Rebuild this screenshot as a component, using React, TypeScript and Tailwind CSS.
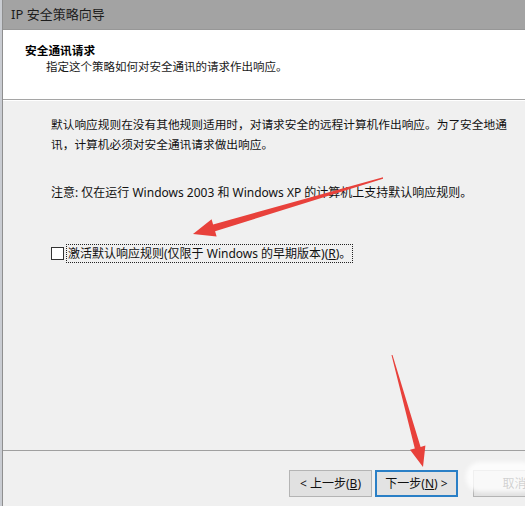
const font = {
  fontFamily: '"Noto Sans", "Noto Sans CJK SC", sans-serif',
};

const Arrows = () => (
  <svg
    className="pointer-events-none absolute left-0 top-0"
    width={525}
    height={506}
    viewBox="0 0 525 506"
  >
    {/* arrow pointing at the checkbox */}
    <polygon
      fill="#e8413b"
      points="383,177.3 213.1,224.4 211.6,219.2 193,234 216.6,236.4 215.1,231.2 383,178.7"
    />
    {/* arrow pointing at the next button */}
    <polygon
      fill="#e8413b"
      points="392.5,354.9 420.6,446.9 425.4,445.6 423,467 410,449.8 414.8,448.5 391.5,355.1"
    />
  </svg>
);

const WizardButton = ({
  children,
  primary = false,
}: {
  children: React.ReactNode;
  primary?: boolean;
}) => (
  <button
    className={
      primary
        ? "flex h-[27px] w-[83px] shrink-0 items-center justify-center border-2 border-[#2a7fc6] bg-[#e3e3e3] text-[12px] text-[#111]"
        : "flex h-[27px] w-[83px] shrink-0 items-center justify-center border border-[#b4b4b4] bg-[#e1e1e1] text-[12px] text-[#111]"
    }
  >
    {children}
  </button>
);

export default function App() {
  return (
    <div
      className="relative flex h-[506px] w-[525px] overflow-hidden bg-[#f0f0f0] text-[#111]"
      style={font}
    >
      {/* desktop edge behind the window */}
      <div className="w-[2px] shrink-0 bg-[#c9ccd2]" />

      <div className="flex min-w-0 flex-1 flex-col border-l border-[#8f8f8f]">
        {/* Title bar */}
        <div className="flex h-[30px] shrink-0 items-center border-b border-[#979797] bg-[#a3a3a3] pl-[8px] text-[13px] text-[#1c1c1c]">
          IP 安全策略向导
        </div>

        {/* Header */}
        <div className="h-[70px] shrink-0 border-b border-[#a5a5a5] bg-white pl-[22px] pt-[12px]">
          <div className="text-[11.7px] font-bold leading-[16px] text-black">安全通讯请求</div>
          <div className="pl-[21px] text-[11.5px] leading-[17px] text-[#1a1a1a]">
            指定这个策略如何对安全通讯的请求作出响应。
          </div>
        </div>
        <div className="h-px shrink-0 bg-white" />

        {/* Body */}
        <div className="flex flex-1 flex-col pl-[48px] pt-[13px] text-[11.7px] text-[#111]">
          <p className="w-[462px] leading-[20px]">
            默认响应规则在没有其他规则适用时，对请求安全的远程计算机作出响应。为了安全地通讯，计算机必须对安全通讯请求做出响应。
          </p>
          <p className="mt-[29px] text-[12px] leading-[20px]">
            注意: 仅在运行 Windows 2003 和 Windows XP 的计算机上支持默认响应规则。
          </p>
          <div className="mt-[41px] flex items-center text-[12px]">
            <span className="h-[13px] w-[13px] shrink-0 border border-[#333] bg-white" />
            <span className="ml-[2px] border border-dotted border-[#222] px-px leading-[17px]">
              激活默认响应规则(仅限于 Windows 的早期版本)(<span className="underline">R</span>)。
            </span>
          </div>
        </div>

        {/* Footer */}
        <div className="h-[56px] shrink-0 border-t border-[#a0a0a0]">
          <div className="flex gap-[3px] pl-[286px] pt-[19px]">
            <WizardButton>
              &lt; 上一步(<span className="underline">B</span>)
            </WizardButton>
            <WizardButton primary>
              下一步(<span className="underline">N</span>) &gt;
            </WizardButton>
            <div className="ml-[12px]">
              <WizardButton>取消</WizardButton>
            </div>
          </div>
        </div>
      </div>

      {/* watermark smudge over the cancel button */}
      <div className="pointer-events-none absolute left-[466px] top-[462px] h-[30px] w-[70px] rounded-[14px] bg-white/80 blur-[2px]" />

      <Arrows />
    </div>
  );
}
